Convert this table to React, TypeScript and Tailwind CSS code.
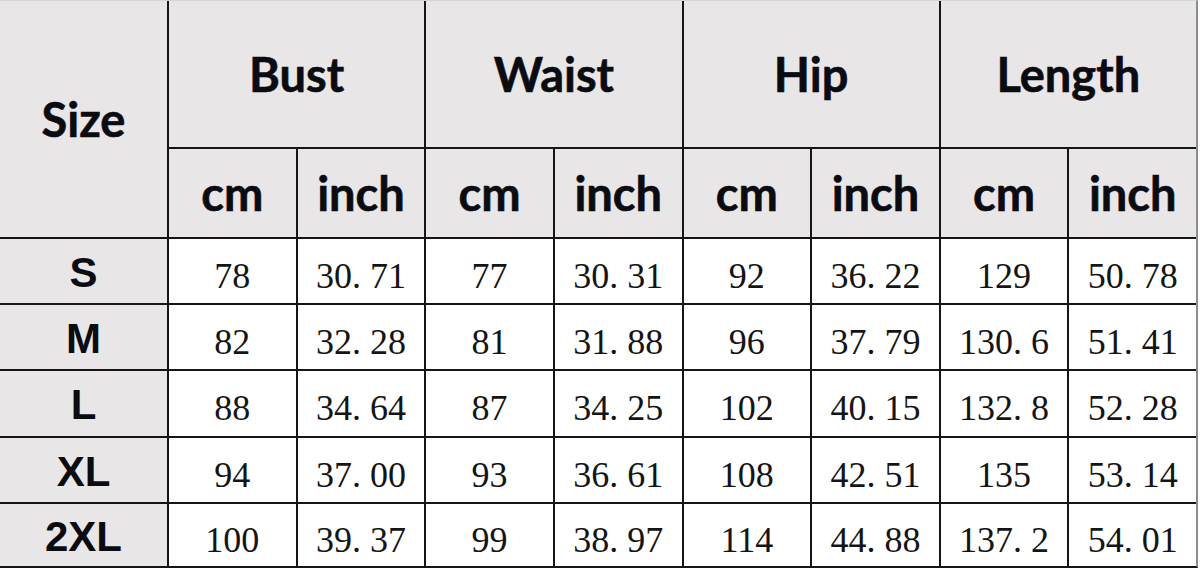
import React from 'react';

// Size chart: each row is [size, bust cm, bust inch, waist cm, waist inch, hip cm, hip inch, length cm, length inch]
const rows: string[][] = [
  ['S', '78', '30. 71', '77', '30. 31', '92', '36. 22', '129', '50. 78'],
  ['M', '82', '32. 28', '81', '31. 88', '96', '37. 79', '130. 6', '51. 41'],
  ['L', '88', '34. 64', '87', '34. 25', '102', '40. 15', '132. 8', '52. 28'],
  ['XL', '94', '37. 00', '93', '36. 61', '108', '42. 51', '135', '53. 14'],
  ['2XL', '100', '39. 37', '99', '38. 97', '114', '44. 88', '137. 2', '54. 01'],
];

const groups = ['Bust', 'Waist', 'Hip', 'Length'];

const headFont =
  "font-['Lato','Open_Sans',sans-serif] font-bold text-[47px] text-[#0b0b12] [-webkit-text-stroke:0.6px_#0b0b12]";
const sizeFont = "font-['Liberation_Sans',Arial,sans-serif] font-bold text-[42px] text-[#0b0b12]";
const numFont = "font-['Liberation_Serif','Times_New_Roman',serif] text-[36px] text-[#141414]";

const App: React.FC = () => {
  return (
    <div className="w-[1200px] h-[568px] bg-white overflow-hidden">
      <div className="w-[1198px] border-t border-t-[#d4d4d4] border-r-2 border-r-[#8c8c8c] border-b-2 border-b-[#151515] bg-[#151515]">
        <div className="grid grid-cols-[167px_repeat(8,minmax(0,1fr))] grid-rows-[146px_88px_64px_64px_65px_64px_62px] gap-[2px]">
          {/* Header */}
          <div className={`row-span-2 bg-[#e8e6e7] flex items-center justify-center ${headFont}`}>Size</div>
          {groups.map((g) => (
            <div key={g} className={`col-span-2 bg-[#e8e6e7] flex items-center justify-center ${headFont}`}>
              {g}
            </div>
          ))}
          {groups.map((g) => (
            <React.Fragment key={g + '-units'}>
              <div className={`bg-[#e8e6e7] flex items-center justify-center ${headFont}`}>cm</div>
              <div className={`bg-[#e8e6e7] flex items-center justify-center ${headFont}`}>inch</div>
            </React.Fragment>
          ))}

          {/* Body */}
          {rows.map((r) => (
            <React.Fragment key={r[0]}>
              <div className={`bg-[#e8e6e7] flex items-center justify-center pt-[2px] ${sizeFont}`}>{r[0]}</div>
              {r.slice(1).map((v, i) => (
                <div
                  key={i}
                  className={`bg-white flex items-center justify-center pt-[9px] whitespace-pre ${numFont}`}
                >
                  {v}
                </div>
              ))}
            </React.Fragment>
          ))}
        </div>
      </div>
    </div>
  );
};

export default App;
